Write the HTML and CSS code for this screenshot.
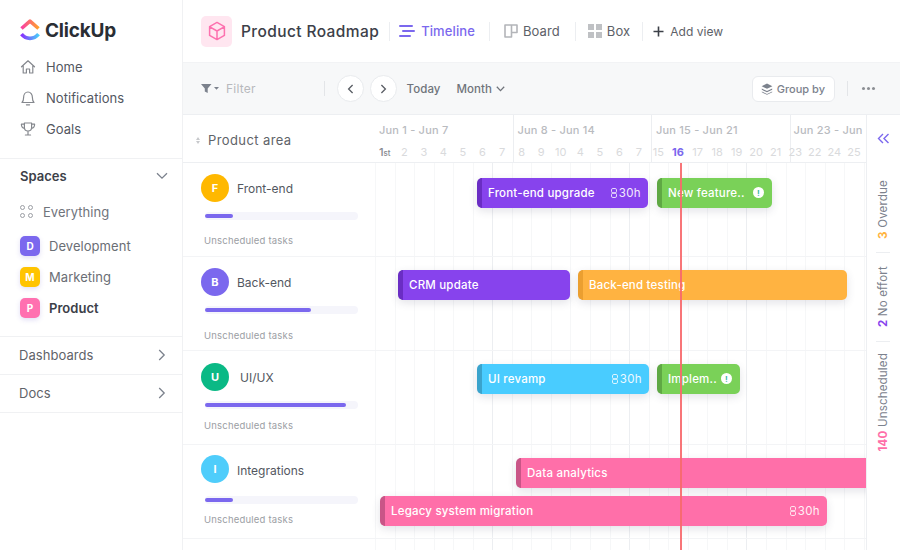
FILE: index.html
```html
<!DOCTYPE html>
<html lang="en">
<head>
  <meta charset="UTF-8">
  <title>Product Roadmap</title>
  <link rel="stylesheet" href="styles.css">
</head>
<body>
  <div class="app">
    <!-- Sidebar -->
    <aside class="sidebar">
      <div class="logo">
        <svg width="20" height="24" viewBox="0 0 20 24">
          <defs>
            <linearGradient id="logoTop" x1="0" y1="0" x2="1" y2="0">
              <stop offset="0" stop-color="#f93fa5"/>
              <stop offset="1" stop-color="#ffa12b"/>
            </linearGradient>
            <linearGradient id="logoBottom" x1="0" y1="0" x2="1" y2="0">
              <stop offset="0" stop-color="#8930fd"/>
              <stop offset="1" stop-color="#49ccf9"/>
            </linearGradient>
          </defs>
          <path d="M1.5 10.5 L10 3.2 L18.5 10.5" fill="none" stroke="url(#logoTop)" stroke-width="3.6" stroke-linejoin="round"/>
          <path d="M1.5 16.2 C6 21.8 14 21.8 18.5 16.2" fill="none" stroke="url(#logoBottom)" stroke-width="3.6"/>
        </svg>
        <span class="logo-text">ClickUp</span>
      </div>
      <nav class="nav-main">
        <a class="nav-item">
          <svg width="16" height="16" viewBox="0 0 16 16" class="nav-icon"><path d="M1.5 7.8 L8 1.8 L14.5 7.8 M3.2 6.8 V14 H6.4 V10 H9.6 V14 H12.8 V6.8"/></svg>
          Home
        </a>
        <a class="nav-item">
          <svg width="16" height="16" viewBox="0 0 16 16" class="nav-icon"><path d="M2 12.5 H14 C12.6 11.2 12.4 9.5 12.4 7.4 C12.4 4.4 10.6 2 8 2 C5.4 2 3.6 4.4 3.6 7.4 C3.6 9.5 3.4 11.2 2 12.5 Z M6.4 14.8 H9.6"/></svg>
          Notifications
        </a>
        <a class="nav-item">
          <svg width="16" height="16" viewBox="0 0 16 16" class="nav-icon"><path d="M4.4 2 H11.6 V6.5 C11.6 8.6 10 10 8 10 C6 10 4.4 8.6 4.4 6.5 Z M4.4 3.2 H1.4 C1.4 5.6 2.4 7 4.6 7.4 M11.6 3.2 H14.6 C14.6 5.6 13.6 7 11.4 7.4 M8 10 V13.4 M5.4 14 H10.6"/></svg>
          Goals
        </a>
      </nav>

      <section class="spaces">
        <div class="spaces-head">
          <span>Spaces</span>
          <svg width="12" height="8" viewBox="0 0 12 8" class="chev"><path d="M1 1.2 L6 6.2 L11 1.2"/></svg>
        </div>
        <a class="everything">
          <span class="dots"><i></i><i></i><i></i><i></i></span>
          Everything
        </a>
        <a class="space"><span class="space-badge bg-purple">D</span>Development</a>
        <a class="space"><span class="space-badge bg-yellow">M</span>Marketing</a>
        <a class="space active"><span class="space-badge bg-pink">P</span>Product</a>
      </section>

      <a class="side-link">
        Dashboards
        <svg width="8" height="12" viewBox="0 0 8 12" class="chev"><path d="M1.2 1 L6.2 6 L1.2 11"/></svg>
      </a>
      <a class="side-link">
        Docs
        <svg width="8" height="12" viewBox="0 0 8 12" class="chev"><path d="M1.2 1 L6.2 6 L1.2 11"/></svg>
      </a>
    </aside>

    <main class="main">
      <!-- Top bar -->
      <header class="topbar">
        <span class="project-icon">
          <svg width="18" height="20" viewBox="0 0 18 20"><path d="M9 1.4 L16.4 5.6 V14.4 L9 18.6 L1.6 14.4 V5.6 Z M1.8 5.8 L9 10 L16.2 5.8 M9 10 V18.4"/></svg>
        </span>
        <h1>Product Roadmap</h1>
        <a class="view view-active">
          <svg width="16" height="14" viewBox="0 0 16 14"><path d="M1 2 H13 M4 7 H15 M1 12 H11"/></svg>
          Timeline
        </a>
        <a class="view view-board">
          <svg width="14" height="14" viewBox="0 0 14 14" class="icon-board"><path d="M1 1 H13 V8.5 H7.5 V13 H1 Z M7.5 1 V8.5"/></svg>
          Board
        </a>
        <a class="view view-box">
          <span class="box-icon"><i></i><i></i><i></i><i></i></span>
          Box
        </a>
        <a class="view view-add">
          <svg width="11" height="11" viewBox="0 0 11 11"><path d="M5.5 .5 V10.5 M.5 5.5 H10.5"/></svg>
          Add view
        </a>
      </header>

      <!-- Toolbar -->
      <div class="toolbar">
        <svg width="18" height="9" viewBox="0 0 18 9" class="filter-icon"><path d="M0 0 H10.5 L6.7 4.4 V9 L3.8 7.4 V4.4 Z M13 3 H18 L15.5 5.8 Z"/></svg>
        <span class="filter-text">Filter</span>
        <span class="tool-sep"></span>
        <button class="round-btn"><svg width="7" height="10" viewBox="0 0 7 10"><path d="M5.6 1 L1.6 5 L5.6 9"/></svg></button>
        <button class="round-btn"><svg width="7" height="10" viewBox="0 0 7 10"><path d="M1.4 1 L5.4 5 L1.4 9"/></svg></button>
        <span class="tool-link today">Today</span>
        <span class="tool-link month">
          Month
          <svg width="9" height="6" viewBox="0 0 9 6"><path d="M.8 .8 L4.5 4.6 L8.2 .8"/></svg>
        </span>
        <button class="group-btn">
          <svg width="12" height="12" viewBox="0 0 12 12"><path d="M6 .6 L11.4 3.2 L6 5.8 L.6 3.2 Z M.8 5.6 L6 8.1 L11.2 5.6 L11.2 6.8 L6 9.3 L.8 6.8 Z M.8 8.4 L6 10.9 L11.2 8.4 L11.2 9.3 L6 11.8 L.8 9.3 Z"/></svg>
          Group by
        </button>
        <span class="tool-sep sep-right"></span>
        <span class="more"><i></i><i></i><i></i></span>
      </div>

      <div class="board">
        <div class="gantt">
          <!-- Timeline header -->
          <div class="gantt-head">
            <div class="area-title">
              <span class="sort"><i class="sort-up"></i><i class="sort-down"></i></span>
              Product area
            </div>
            <div class="calendar">
              <div class="weeks">
                <span class="week">Jun 1 - Jun 7</span>
                <span class="week">Jun 8 - Jun 14</span>
                <span class="week">Jun 15 - Jun 21</span>
                <span class="week week-last">Jun 23 - Jun</span>
              </div>
              <div class="days">
                <span class="first">1<small>st</small></span><span>2</span><span>3</span><span>4</span><span>5</span><span>6</span><span>7</span><span>8</span><span>9</span><span>10</span><span>4</span><span>5</span><span>6</span><span>7</span><span>15</span><span class="current">16</span><span>17</span><span>18</span><span>19</span><span>20</span><span>21</span><span>23</span><span>22</span><span>24</span><span>25</span>
              </div>
            </div>
          </div>

          <!-- Rows -->
          <div class="row">
            <div class="area area-front">
              <div class="area-name"><span class="avatar bg-amber">F</span>Front-end</div>
              <div class="progress"><div class="progress-fill" style="width: 18%"></div></div>
              <div class="unscheduled">Unscheduled tasks</div>
            </div>
            <div class="track">
              <div class="bar bar-purple b-frontend">Front-end upgrade<span class="hours"><svg width="6" height="10" viewBox="0 0 6 10"><rect x=".5" y=".5" width="5" height="4.3" rx="1.4"/><rect x=".5" y="5.2" width="5" height="4.3" rx="1.4"/></svg>30h</span></div>
              <div class="bar bar-green b-feature">New feature..<span class="alert">!</span></div>
            </div>
          </div>

          <div class="row">
            <div class="area area-back">
              <div class="area-name"><span class="avatar bg-indigo">B</span>Back-end</div>
              <div class="progress"><div class="progress-fill" style="width: 69%"></div></div>
              <div class="unscheduled">Unscheduled tasks</div>
            </div>
            <div class="track">
              <div class="bar bar-purple b-crm">CRM update</div>
              <div class="bar bar-orange b-testing">Back-end testing</div>
            </div>
          </div>

          <div class="row">
            <div class="area area-ui">
              <div class="area-name"><span class="avatar bg-green">U</span>UI/UX</div>
              <div class="progress"><div class="progress-fill" style="width: 92%"></div></div>
              <div class="unscheduled">Unscheduled tasks</div>
            </div>
            <div class="track">
              <div class="bar bar-blue b-revamp">UI revamp<span class="hours"><svg width="6" height="10" viewBox="0 0 6 10"><rect x=".5" y=".5" width="5" height="4.3" rx="1.4"/><rect x=".5" y="5.2" width="5" height="4.3" rx="1.4"/></svg>30h</span></div>
              <div class="bar bar-green b-implem">Implem..<span class="alert">!</span></div>
            </div>
          </div>

          <div class="row">
            <div class="area area-int">
              <div class="area-name"><span class="avatar bg-sky">I</span><span class="name-low">Integrations</span></div>
              <div class="progress"><div class="progress-fill" style="width: 18%"></div></div>
              <div class="unscheduled">Unscheduled tasks</div>
            </div>
            <div class="track">
              <div class="bar bar-pink b-data">Data analytics</div>
              <div class="bar bar-pink b-legacy">Legacy system migration<span class="hours"><svg width="6" height="10" viewBox="0 0 6 10"><rect x=".5" y=".5" width="5" height="4.3" rx="1.4"/><rect x=".5" y="5.2" width="5" height="4.3" rx="1.4"/></svg>30h</span></div>
            </div>
          </div>

          <div class="row row-empty">
            <div class="area"></div>
            <div class="track"></div>
          </div>

          <div class="today-line"></div>
        </div>

        <!-- Right rail -->
        <aside class="rail">
          <svg width="13" height="11" viewBox="0 0 13 11" class="rail-toggle"><path d="M6 1 L1.5 5.5 L6 10 M11.5 1 L7 5.5 L11.5 10"/></svg>
          <div class="rail-item"><b class="c-orange">3</b> Overdue</div>
          <span class="rail-sep sep-first"></span>
          <div class="rail-item"><b class="c-purple">2</b> No effort</div>
          <span class="rail-sep sep-second"></span>
          <div class="rail-item"><b class="c-pink">140</b> Unscheduled</div>
        </aside>
      </div>
    </main>
  </div>
</body>
</html>
```

FILE: styles.css
```css
* {
  box-sizing: border-box;
}
html, body {
  margin: 0;
  padding: 0;
  background: #fff;
}
body {
  font-family: Inter, "Noto Sans", sans-serif;
  color: #53575f;
  overflow: hidden;
}
svg {
  display: block;
  flex: none;
}
.app {
  display: flex;
  width: 900px;
  height: 550px;
  overflow: hidden;
  border-radius: 16px 16px 0 0;
  background: #fff;
}

/* Sidebar */
.sidebar {
  width: 183px;
  flex: none;
  border-right: 1px solid #f0f1f3;
}
.logo {
  display: flex;
  align-items: center;
  gap: 5px;
  height: 42px;
  margin-top: 9px;
  padding-left: 20px;
}
.logo-text {
  font-size: 19px;
  font-weight: 700;
  letter-spacing: -.2px;
  color: #2a2e34;
}
.nav-main {
  display: flex;
  flex-direction: column;
}
.nav-item {
  display: flex;
  align-items: center;
  gap: 18px;
  height: 31px;
  padding-left: 20px;
  font-size: 13px;
  letter-spacing: .05px;
  color: #53575f;
}
.nav-icon {
  fill: none;
  stroke: #85888e;
  stroke-width: 1.2;
  stroke-linejoin: round;
  stroke-linecap: round;
  margin-right: -8px;
}
.spaces {
  margin-top: 14px;
  padding-bottom: 13px;
  border-top: 1px solid #f0f1f3;
  border-bottom: 1px solid #f0f1f3;
}
.spaces-head {
  display: flex;
  justify-content: space-between;
  align-items: center;
  height: 34px;
  padding: 0 14px 0 20px;
  font-size: 13px;
  font-weight: 600;
  color: #3c4048;
}
.chev {
  fill: none;
  stroke: #7c828d;
  stroke-width: 1.3;
}
.everything {
  display: flex;
  align-items: center;
  gap: 10px;
  height: 37px;
  padding-left: 20px;
  font-size: 13px;
  letter-spacing: .05px;
  color: #70747b;
}
.dots {
  display: grid;
  grid-template-columns: 5px 5px;
  gap: 3px;
  width: 13px;
}
.dots i {
  width: 5px;
  height: 5px;
  border: 1px solid #9b9ea4;
  border-radius: 50%;
}
.space {
  display: flex;
  align-items: center;
  gap: 9px;
  height: 31px;
  padding-left: 20px;
  font-size: 13px;
  letter-spacing: .05px;
  color: #6a6e75;
}
.space.active {
  font-weight: 600;
  color: #3c4048;
}
.space-badge {
  display: flex;
  align-items: center;
  justify-content: center;
  width: 20px;
  height: 20px;
  border-radius: 5px;
  font-size: 10px;
  font-weight: 700;
  letter-spacing: 0;
  color: #fff;
  box-shadow: 0 2px 5px rgba(90, 80, 200, .18);
}
.bg-purple { background: #7b68ee; }
.bg-yellow { background: #ffc400; }
.bg-pink { background: #ff70b0; }
.bg-amber { background: #ffb800; }
.bg-indigo { background: #7b68ee; }
.bg-green { background: #0ab985; }
.bg-sky { background: #4fcdfb; }
.side-link {
  display: flex;
  justify-content: space-between;
  align-items: center;
  height: 38px;
  padding: 0 16px 2px 19px;
  border-bottom: 1px solid #f0f1f3;
  font-size: 13px;
  letter-spacing: .05px;
  color: #5f6369;
}

/* Top bar */
.main {
  flex: 1;
  display: flex;
  flex-direction: column;
  min-width: 0;
}
.topbar {
  display: flex;
  align-items: center;
  height: 62px;
  padding-left: 18px;
  flex: none;
}
.project-icon {
  display: flex;
  align-items: center;
  justify-content: center;
  width: 31px;
  height: 31px;
  border-radius: 5px;
  background: #ffe6f0;
}
.project-icon svg {
  fill: none;
  stroke: #fd71af;
  stroke-width: 1.5;
  stroke-linejoin: round;
}
h1 {
  margin: 0 0 0 9px;
  padding-right: 10px;
  font-size: 15.5px;
  font-weight: 500;
  letter-spacing: .4px;
  color: #3c4048;
}
.view {
  display: flex;
  align-items: center;
  gap: 5px;
  height: 19px;
  border-left: 1px solid #eceef1;
  font-size: 13px;
  letter-spacing: .1px;
  color: #5d6168;
}
.view-active {
  gap: 6px;
  padding: 0 14px 0 9px;
  color: #7b68ee;
  font-weight: 500;
}
.view-active svg {
  fill: none;
  stroke: #7b68ee;
  stroke-width: 2;
  stroke-linecap: round;
}
.view-board {
  padding: 0 15px 0 14px;
}
.view-box {
  padding: 0 12px 0 12px;
}
.icon-board {
  fill: none;
  stroke: #b3b5b9;
  stroke-width: 1.6;
  stroke-linejoin: round;
}
.box-icon {
  display: grid;
  grid-template-columns: 6px 6px;
  gap: 2px;
}
.box-icon i {
  height: 6px;
  background: #bfc1c4;
}
.view-add {
  gap: 6px;
  padding-left: 10px;
  font-size: 12px;
  letter-spacing: .05px;
}
.view-add svg {
  stroke: #3c4048;
  stroke-width: 1.6;
}

/* Toolbar */
.toolbar {
  display: flex;
  align-items: center;
  height: 53px;
  flex: none;
  padding-left: 18px;
  border-top: 1px solid #f2f3f5;
  border-bottom: 1px solid #edeff2;
  background: #f7f8f9;
  font-size: 12px;
}
.filter-icon {
  fill: #7c828d;
}
.filter-text {
  margin-left: 7px;
  color: #b7b9bd;
  letter-spacing: .2px;
}
.tool-sep {
  width: 1px;
  height: 15px;
  margin-left: 68px;
  background: #e3e5e8;
}
.round-btn {
  display: flex;
  align-items: center;
  justify-content: center;
  width: 27px;
  height: 27px;
  margin-left: 6px;
  padding: 0;
  border: 1px solid #e9ebee;
  border-radius: 50%;
  background: #fff;
}
.tool-sep + .round-btn {
  margin-left: 12px;
}
.round-btn svg {
  fill: none;
  stroke: #585c63;
  stroke-width: 1.3;
}
.tool-link {
  font-size: 11.5px;
  color: #70747b;
  font-weight: 500;
  letter-spacing: .05px;
}
.today {
  margin-left: 10px;
}
.month {
  display: flex;
  align-items: center;
  gap: 4px;
  margin-left: 16px;
}
.month svg {
  fill: none;
  stroke: #70747b;
  stroke-width: 1.3;
}
.group-btn {
  display: flex;
  align-items: center;
  gap: 4px;
  height: 26px;
  margin-left: auto;
  padding: 0 9px 0 8px;
  border: 1px solid #e9ebee;
  border-radius: 6px;
  background: #fff;
  font-family: inherit;
  font-size: 11px;
  font-weight: 500;
  letter-spacing: 0;
  color: #7c828d;
}
.group-btn svg {
  fill: #7c828d;
}
.sep-right {
  margin-left: 12px;
}
.more {
  display: flex;
  gap: 2px;
  margin: 0 25px 0 14px;
}
.more i {
  width: 3px;
  height: 3px;
  border-radius: 50%;
  background: #8b8e93;
}

/* Gantt */
.board {
  flex: 1;
  display: flex;
  min-height: 0;
}
.gantt {
  position: relative;
  width: 683px;
  flex: none;
  overflow: hidden;
}
.gantt-head {
  display: flex;
  height: 48px;
  border-bottom: 1px solid #edeff2;
}
.area-title {
  display: flex;
  align-items: center;
  gap: 8px;
  width: 192px;
  flex: none;
  padding: 3px 0 0 13px;
  font-size: 13px;
  letter-spacing: .4px;
  color: #5f6369;
}
.sort {
  display: flex;
  flex-direction: column;
  gap: 1px;
}
.sort i {
  width: 0;
  height: 0;
  border-left: 2.5px solid transparent;
  border-right: 2.5px solid transparent;
}
.sort-up {
  border-bottom: 3px solid #c7c9cc;
}
.sort-down {
  border-top: 3px solid #c7c9cc;
}
.calendar {
  flex: 1;
  min-width: 0;
  overflow: hidden;
}
.weeks {
  display: flex;
  height: 30px;
}
.week {
  width: 138.5px;
  height: 47px;
  flex: none;
  padding: 8px 0 0 4px;
  border-right: 1px solid #eceef1;
  font-size: 11px;
  font-weight: 500;
  letter-spacing: .2px;
  white-space: nowrap;
  color: #b9bbbf;
}
.week-last {
  width: 76px;
  border-right: 0;
  padding-left: 3px;
  overflow: hidden;
}
.days {
  display: flex;
  height: 17px;
  font-size: 11px;
  line-height: 15px;
  color: #d9dadc;
}
.days span {
  width: 19.55px;
  flex: none;
  text-align: center;
}
.days .first {
  font-weight: 500;
  color: #85888e;
  white-space: nowrap;
}
.days small {
  font-size: 8px;
}
.days .current {
  font-weight: 700;
  color: #7b68ee;
}
.row {
  display: flex;
  height: 94px;
}
.row-empty {
  height: 20px;
}
.area {
  width: 192px;
  flex: none;
  padding-left: 18px;
  border-bottom: 1px solid #f3f4f6;
}
.area-name {
  display: flex;
  align-items: center;
  gap: 8px;
  height: 28px;
  font-size: 12px;
  color: #53575f;
}
.name-low {
  padding-top: 3px;
}
.avatar {
  display: flex;
  align-items: center;
  justify-content: center;
  width: 28px;
  height: 28px;
  border-radius: 50%;
  font-size: 11px;
  font-weight: 700;
  color: #fff;
}
.progress {
  width: 153px;
  height: 8px;
  margin: 10px 0 0 4px;
  padding: 2px 0;
  border-radius: 4px;
  background: #f5f5fb;
}
.progress-fill {
  height: 4px;
  border-radius: 2px;
  background: #7b68ee;
}
.unscheduled {
  margin: 15px 0 0 3px;
  font-size: 9.5px;
  letter-spacing: .2px;
  color: #9b9ea4;
}
.area-front { padding-top: 11px; }
.area-back { padding-top: 11px; }
.area-back .unscheduled { margin-top: 16px; }
.area-ui { padding-top: 12px; }
.area-ui .area-name { gap: 11px; }
.area-ui .unscheduled { margin-top: 11px; }
.area-int { padding-top: 10px; }
.area-int .progress { margin-top: 13px; }
.area-int .unscheduled { margin-top: 10px; }

.track {
  position: relative;
  flex: 1;
  border-bottom: 1px solid #f3f4f6;
  background-image:
    linear-gradient(#eceef1, #eceef1),
    linear-gradient(#eceef1, #eceef1),
    linear-gradient(#eceef1, #eceef1),
    repeating-linear-gradient(90deg, #f6f7f8 0, #f6f7f8 1px, transparent 1px, transparent 19.55px);
  background-size: 1px 100%, 1px 100%, 1px 100%, 100% 100%;
  background-position: 117px 0, 254px 0, 371px 0, 0 0;
  background-repeat: no-repeat;
}

/* Bars sit on the timeline at their dates */
.bar {
  position: absolute;
  display: flex;
  align-items: center;
  height: 30px;
  padding: 0 7px 1px 6px;
  border-left: 5px solid transparent;
  border-radius: 5px;
  font-size: 11.5px;
  font-weight: 500;
  letter-spacing: .2px;
  white-space: nowrap;
  color: #fff;
  box-shadow: 0 3px 8px rgba(60, 60, 90, .14);
}
.bar-purple { background: #8743ed; border-left-color: #6a2dc4; }
.bar-green { background: #7ad158; border-left-color: #5fa844; }
.bar-orange { background: #ffb341; border-left-color: #eb9f30; }
.bar-blue { background: #49ccff; border-left-color: #3aa3cc; }
.bar-pink { background: #ff6fa9; border-left-color: #c95587; }

.b-frontend { top: 15px; left: 102px; width: 171px; }
.b-feature { top: 15px; left: 282px; width: 115px; }
.b-crm { top: 13px; left: 23px; width: 172px; }
.b-testing { top: 13px; left: 203px; width: 269px; }
.b-revamp { top: 13px; left: 102px; width: 172px; }
.b-implem { top: 13px; left: 282px; width: 83px; }
.b-data { top: 13px; left: 141px; width: 360px; border-radius: 5px 0 0 5px; }
.b-legacy { top: 51px; left: 5px; width: 447px; z-index: 1; }

.hours {
  display: flex;
  align-items: center;
  gap: 2px;
  margin-left: auto;
  font-weight: 400;
  letter-spacing: .4px;
  opacity: .9;
}
.hours svg {
  fill: none;
  stroke: #fff;
  stroke-width: .9;
}
.alert {
  display: flex;
  align-items: center;
  justify-content: center;
  width: 11px;
  height: 11px;
  margin-left: auto;
  margin-right: 1px;
  border-radius: 50%;
  background: #fff;
  font-size: 8px;
  font-weight: 700;
  line-height: 1;
  color: #39b8a0;
}
.today-line {
  position: absolute;
  top: 48px;
  bottom: 0;
  left: 497px;
  width: 2px;
  background: #f7696c;
  opacity: .92;
  z-index: 2;
}

/* Right rail */
.rail {
  flex: 1;
  display: flex;
  flex-direction: column;
  align-items: center;
  padding-right: 1px;
  border-left: 1px solid #edeff2;
  background: #fff;
}
.rail-toggle {
  margin: 18px 0 36px;
  fill: none;
  stroke: #7b68ee;
  stroke-width: 1.4;
}
.rail-item {
  writing-mode: vertical-rl;
  transform: rotate(180deg);
  font-size: 11.5px;
  letter-spacing: .2px;
  white-space: nowrap;
  color: #7c828d;
}
.rail-item b {
  font-weight: 700;
}
.c-orange { color: #ffb341; }
.c-purple { color: #8743ed; }
.c-pink { color: #ff6fa9; }
.rail-sep {
  width: 14px;
  height: 1px;
  background: #eceef1;
}
.sep-first {
  margin: 13px 0 13px;
}
.sep-second {
  margin: 14px 0 11px;
}
```
